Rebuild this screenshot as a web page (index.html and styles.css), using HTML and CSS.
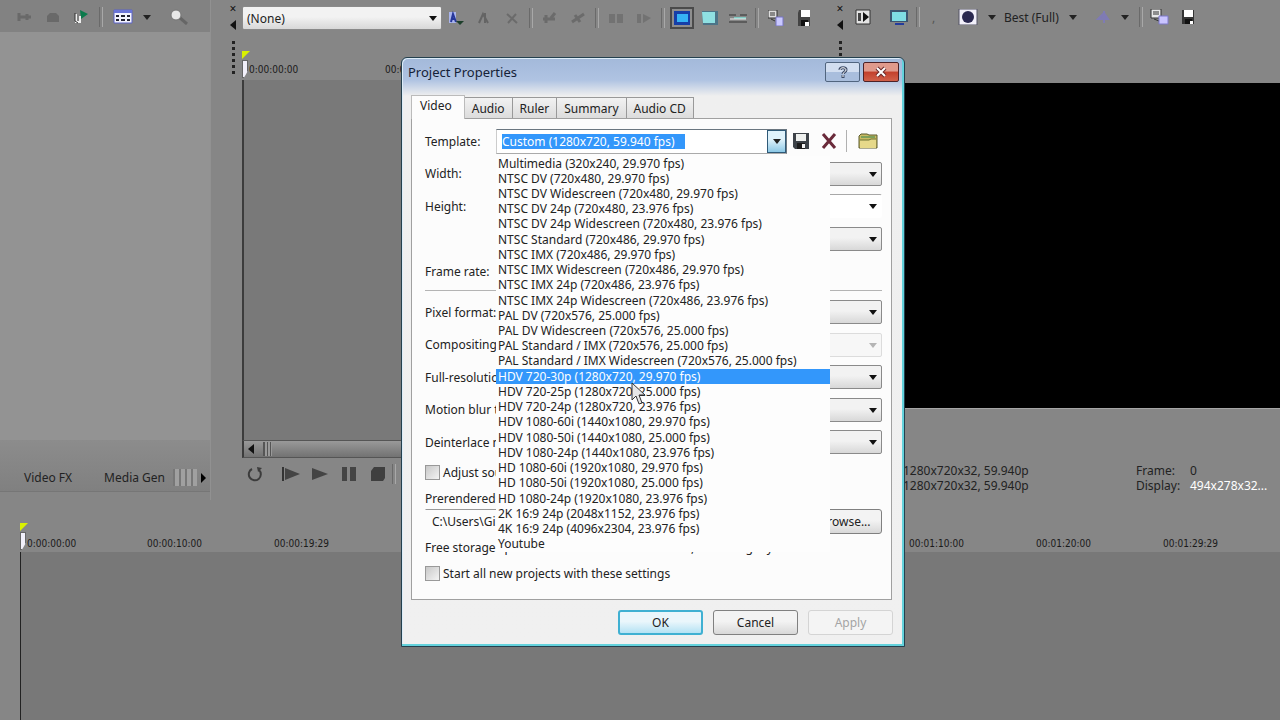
FILE: index.html
```
<!DOCTYPE html>
<html lang="en">
<head>
    <meta charset="UTF-8">
    <meta name="viewport" content="width=device-width, initial-scale=1.0">
    <title>Project Properties</title>
    <link rel="stylesheet" href="styles.css">
</head>
<body>
    <div class="app">
        <div class="workspace">
            <!-- media panel -->
            <section class="panel media">
                <div class="toolbar">
                    <svg class="icon faded" viewBox="0 0 16 16"><path d="M2 4v8M2 8h12M10 5v6" stroke="#444" stroke-width="3" fill="none"/></svg>
                    <svg class="icon faded" viewBox="0 0 16 16"><path d="M2 13V7l3-3h6l3 3v6z" fill="#444"/></svg>
                    <svg class="icon" viewBox="0 0 16 16"><path d="M7 1l8 4-7 5z" fill="#0c7a4c"/><path d="M3 5v8h4V7" stroke="#eee" stroke-width="2" fill="none"/><path d="M2 4v8l3 2" stroke="#333" fill="none"/></svg>
                    <span class="sep"></span>
                    <svg class="icon wide" viewBox="0 0 20 16"><path d="M1 1h18v13H1z" fill="#f4f4ff" stroke="#5a62c8"/><path d="M1 1h18v3H1z" fill="#6a74d8"/><path d="M3 6h3v2H3zM8 6h4v2H8zM14 6h3v2h-3zM3 10h3v2H3zM8 10h4v2H8zM14 10h3v2h-3z" fill="#223"/></svg>
                    <span class="arrow"></span>
                    <svg class="icon wide zoom" viewBox="0 0 20 16"><path d="M10 8l8 7" stroke="#666" stroke-width="3"/><circle cx="7" cy="6" r="5" fill="#e8e8e8" stroke="#777"/></svg>
                </div>
                <div class="media-list"></div>
                <div class="media-tabs">
                    <a href="#">Video FX</a>
                    <a href="#">Media Gen</a>
                    <span class="ridges"></span>
                    <span class="arrow right"></span>
                </div>
            </section>

            <!-- trimmer -->
            <section class="panel docked">
                <div class="grip"><span>×</span><span class="arrow left"></span><i></i></div>
                <div class="trimmer">
                    <div class="toolbar slots">
                        <span class="picker">
                            <select aria-label="Trimmer media"><option>(None)</option></select>
                        </span>
                        <svg class="icon" viewBox="0 0 16 16"><path d="M1 2h7v11H1z" fill="#a9b4ec"/><path d="M3 12l2-8 3 8M4 9h3" stroke="#26379a" stroke-width="2" fill="none"/><path d="M8 11h8l-4 4z" fill="#1d3f2b"/></svg>
                        <svg class="icon faded" viewBox="0 0 16 16"><path d="M3 13l4-9 5 9M9 3v10" stroke="#333" stroke-width="2" fill="none"/></svg>
                        <svg class="icon faded" viewBox="0 0 16 16"><path d="M3 4l10 9M12 4l-8 9" stroke="#444" stroke-width="2"/></svg>
                        <span class="sep"></span>
                        <svg class="icon faded" viewBox="0 0 16 16"><path d="M1 9h12M4 5v8M13 3l-4 5" stroke="#444" stroke-width="3" fill="none"/></svg>
                        <svg class="icon faded" viewBox="0 0 16 16"><path d="M2 12L14 4M5 5l5 7" stroke="#444" stroke-width="3" fill="none"/></svg>
                        <span class="sep"></span>
                        <svg class="icon faded" viewBox="0 0 16 16"><path d="M1 4h6v9H1zM9 4h6v9H9z" fill="#555"/></svg>
                        <svg class="icon faded" viewBox="0 0 16 16"><path d="M1 4h4v9H1zM7 4l8 4-8 5z" fill="#555"/></svg>
                        <span class="sep"></span>
                        <svg class="icon active" viewBox="0 0 16 16"><path d="M0 1h16v14H0z" fill="#163fa8"/><path d="M3 4h11v8H3z" fill="#35b4f5"/></svg>
                        <svg class="icon" viewBox="0 0 16 16"><path d="M0 1h16v14H1z" fill="#4c7488"/><path d="M0 2h13v11H1z" fill="#8fe0e2"/></svg>
                        <svg class="icon wide" viewBox="0 0 20 16"><path d="M1 12h18M1 5h7M12 5h7" stroke="#333" stroke-width="1"/><path d="M6 7h12v2H6z" fill="#7fc9c2"/><path d="M2 9h16" stroke="#eee"/></svg>
                        <span class="sep"></span>
                        <svg class="icon" viewBox="0 0 16 16"><path d="M0 0h9v8H0z" fill="#ddd" stroke="#333"/><path d="M2 3h5M2 5h5M3 9l4 2" stroke="#333"/><path d="M8 7h7v9H8z" fill="#c9c8ff" stroke="#7774c4"/></svg>
                        <svg class="icon" viewBox="0 0 16 16"><path d="M3 0h11v16H2V3z" fill="#444"/><path d="M5 0h9v7H5z" fill="#fff"/><path d="M5 10h7v6H5z" fill="#111"/><path d="M9 12h4v4H9z" fill="#fff"/></svg>
                    </div>
                    <div class="ruler short">
                        <span class="marker"></span>
                        <span>0:00:00:00</span>
                        <span>00:00:10:00</span>
                    </div>
                    <div class="wave"></div>
                    <div class="scroll"><span class="arrow left"></span><i></i></div>
                    <div class="transport">
                        <svg class="icon" viewBox="0 0 16 16"><path d="M5 3a6 6 0 1 0 7 1" fill="none" stroke="#3c3c3c" stroke-width="2"/><path d="M10 1l5 1-4 4z" fill="#3c3c3c"/></svg>
                        <svg class="icon wide" viewBox="0 0 20 16"><path d="M2 1v14" stroke="#333" stroke-width="2"/><path d="M4 2l15 6-15 6z" fill="#444"/></svg>
                        <svg class="icon" viewBox="0 0 16 16"><path d="M0 2l16 6-16 6z" fill="#444"/></svg>
                        <svg class="icon" viewBox="0 0 16 16"><path d="M1 1h5v14H1zM9 1h6v14H9z" fill="#444"/></svg>
                        <svg class="icon" viewBox="0 0 16 16"><path d="M1 5l3-4h11v11l-2 3H1z" fill="#3f3f3f"/></svg>
                        <span class="sep"></span>
                    </div>
                </div>
            </section>

            <!-- preview -->
            <section class="panel docked preview-panel">
                <div class="grip"><span>×</span><span class="arrow left"></span><i></i></div>
                <div class="preview">
                    <div class="toolbar preview-bar">
                        <svg class="icon" viewBox="0 0 16 16"><path d="M1 1h14v14H1z" fill="#e4e4e4" stroke="#333"/><path d="M3 4h3v8H3z" fill="#444"/><path d="M8 3l6 5-6 5z" fill="#111"/></svg>
                        <svg class="icon wide" viewBox="0 0 20 16"><path d="M1 1h18v12H1z" fill="#3d5570"/><path d="M3 3h14v9H3z" fill="#7fdde4"/><path d="M6 14h9v2H6z" fill="#233c9c"/></svg>
                        <span class="sep"></span>
                        <span class="dim">,</span>
                        <svg class="icon wide" viewBox="0 0 20 16"><path d="M1 0h18v16H1z" fill="#f2f0fa" stroke="#556"/><circle cx="10" cy="8" r="6" fill="#2a2850"/></svg>
                        <span class="arrow"></span>
                        <span class="quality">Best (Full)</span>
                        <span class="arrow"></span>
                        <svg class="icon overlay" viewBox="0 0 16 16"><path d="M9 2v12M3 10l6-6 4 6z" stroke="#7f7bb4" stroke-width="2" fill="#7f7bb4"/></svg>
                        <span class="arrow"></span>
                        <span class="sep"></span>
                        <svg class="icon wide copy" viewBox="0 0 20 16"><path d="M1 0h10v9H1z" fill="#e8e8e8" stroke="#333"/><path d="M3 3h6M3 5h6M4 10l5 2" stroke="#333"/><path d="M9 7h9v8H9z" fill="#c9c4ff" stroke="#7d78c8"/></svg>
                        <svg class="icon" viewBox="0 0 16 16"><path d="M2 1h12v14H2z" fill="#333"/><path d="M4 1h9v7H4z" fill="#fff"/><path d="M5 10h7v5H5z" fill="#111"/><path d="M10 12h3v3h-3z" fill="#fff"/></svg>
                    </div>
                    <div class="screen"></div>
                    <dl class="status">
                        <dt>Project:</dt><dd>1280x720x32, 59.940p</dd>
                        <dt>Frame:</dt><dd>0</dd>
                        <dt>Preview:</dt><dd>1280x720x32, 59.940p</dd>
                        <dt>Display:</dt><dd class="live">494x278x32...</dd>
                    </dl>
                </div>
            </section>
        </div>

        <!-- timeline -->
        <section class="timeline">
            <div class="ruler">
                <span class="marker"></span>
                <span>0:00:00:00</span>
                <span>00:00:10:00</span>
                <span>00:00:19:29</span>
                <span>00:00:29:29</span>
                <span>00:00:39:29</span>
                <span>00:00:50:00</span>
                <span>00:00:59:28</span>
                <span>00:01:10:00</span>
                <span>00:01:20:00</span>
                <span>00:01:29:29</span>
            </div>
            <div class="tracks"></div>
        </section>
    </div>

    <div class="dialog" role="dialog" aria-labelledby="dlg-title">
        <header class="titlebar">
            <h1 id="dlg-title">Project Properties</h1>
            <button class="win-btn" aria-label="Help">
                <svg class="glyph" viewBox="0 0 12 12"><path d="M3 4c0-3 6-3 6 0 0 2-3 2-3 4M6 9v3" fill="none" stroke="#3c4a66" stroke-width="3"/><path d="M3 4c0-3 6-3 6 0 0 2-3 2-3 4M6 9v2" fill="none" stroke="#fff" stroke-width="1"/></svg>
            </button>
            <button class="win-btn close" aria-label="Close">
                <svg class="glyph" viewBox="0 0 12 12"><path d="M2 2l8 8M10 2l-8 8" stroke="#6b2a2a" stroke-width="4"/><path d="M2 2l8 8M10 2l-8 8" stroke="#fff" stroke-width="2"/></svg>
            </button>
        </header>

        <nav class="tabs" role="tablist">
            <button class="tab current" role="tab">Video</button>
            <button class="tab" role="tab">Audio</button>
            <button class="tab" role="tab">Ruler</button>
            <button class="tab" role="tab">Summary</button>
            <button class="tab" role="tab">Audio CD</button>
        </nav>

        <form class="page">
            <div class="fields">
                <div class="row">
                    <label class="template-label" for="template">Template:</label>
                    <div class="combo">
                        <input id="template" type="text" role="combobox" aria-expanded="true" aria-controls="templates" value="Custom (1280x720, 59.940 fps)">
                        <button type="button" class="combo-btn" aria-label="Open list"><span class="arrow"></span></button>
                        <ul class="templates" id="templates" role="listbox">
                            <li role="option">Multimedia (320x240, 29.970 fps)</li>
                            <li role="option">NTSC DV (720x480, 29.970 fps)</li>
                            <li role="option">NTSC DV Widescreen (720x480, 29.970 fps)</li>
                            <li role="option">NTSC DV 24p (720x480, 23.976 fps)</li>
                            <li role="option">NTSC DV 24p Widescreen (720x480, 23.976 fps)</li>
                            <li role="option">NTSC Standard (720x486, 29.970 fps)</li>
                            <li role="option">NTSC IMX (720x486, 29.970 fps)</li>
                            <li role="option">NTSC IMX Widescreen (720x486, 29.970 fps)</li>
                            <li role="option">NTSC IMX 24p (720x486, 23.976 fps)</li>
                            <li role="option">NTSC IMX 24p Widescreen (720x486, 23.976 fps)</li>
                            <li role="option">PAL DV (720x576, 25.000 fps)</li>
                            <li role="option">PAL DV Widescreen (720x576, 25.000 fps)</li>
                            <li role="option">PAL Standard / IMX (720x576, 25.000 fps)</li>
                            <li role="option">PAL Standard / IMX Widescreen (720x576, 25.000 fps)</li>
                            <li role="option" class="selected" aria-selected="true">HDV 720-30p (1280x720, 29.970 fps)</li>
                            <li role="option">HDV 720-25p (1280x720, 25.000 fps)</li>
                            <li role="option">HDV 720-24p (1280x720, 23.976 fps)</li>
                            <li role="option">HDV 1080-60i (1440x1080, 29.970 fps)</li>
                            <li role="option">HDV 1080-50i (1440x1080, 25.000 fps)</li>
                            <li role="option">HDV 1080-24p (1440x1080, 23.976 fps)</li>
                            <li role="option">HD 1080-60i (1920x1080, 29.970 fps)</li>
                            <li role="option">HD 1080-50i (1920x1080, 25.000 fps)</li>
                            <li role="option">HD 1080-24p (1920x1080, 23.976 fps)</li>
                            <li role="option">2K 16:9 24p (2048x1152, 23.976 fps)</li>
                            <li role="option">4K 16:9 24p (4096x2304, 23.976 fps)</li>
                            <li role="option">Youtube</li>
                        </ul>
                    </div>
                    <button type="button" class="tool" aria-label="Save template">
                        <svg class="icon" viewBox="0 0 16 16"><path d="M0 0h16v16H2l-2-2z" fill="#3d4248"/><path d="M3 1h10v7H3z" fill="#eef0ee"/><path d="M4 10h8v6H4z" fill="#1c1c1c"/><path d="M9 11h3v4H9z" fill="#f4f4f4"/></svg>
                    </button>
                    <button type="button" class="tool" aria-label="Delete template">
                        <svg class="icon" viewBox="0 0 16 16"><path d="M2 1l12 14M14 1L2 15" stroke="#6a2a3a" stroke-width="3"/></svg>
                    </button>
                    <span class="rule"></span>
                    <button type="button" class="tool" aria-label="Match media settings">
                        <svg class="icon wide" viewBox="0 0 20 16"><path d="M1 3l2-2h6l2 1h8v13H1z" fill="#c9bb62" stroke="#5b5a2c"/><path d="M3 4h14" stroke="#7ea05a" stroke-width="2"/><path d="M2 7h9l2-1h5v9H2z" fill="#e6d98a"/><path d="M2 7h9l2-1h5" stroke="#6d7232" fill="none"/></svg>
                    </button>
                </div>
                <div class="row">
                    <label for="width">Width:</label>
                    <span class="picker"><select id="width"><option></option></select></span>
                </div>
                <div class="row">
                    <label for="height">Height:</label>
                    <span class="picker flat"><select id="height"><option></option></select></span>
                </div>
                <div class="row">
                    <span class="spacer"></span>
                    <span class="picker"><select aria-label="Field order"><option></option></select></span>
                </div>
                <div class="row">
                    <label>Frame rate:</label>
                </div>
            </div>

            <hr>

            <div class="fields">
                <div class="row">
                    <label for="pixel">Pixel format:</label>
                    <span class="picker"><select id="pixel"><option></option></select></span>
                </div>
                <div class="row">
                    <label for="gamma">Compositing gamma:</label>
                    <span class="picker off"><select id="gamma" disabled><option></option></select></span>
                </div>
                <div class="row">
                    <label for="quality">Full-resolution rendering:</label>
                    <span class="picker"><select id="quality"><option></option></select></span>
                </div>
                <div class="row">
                    <label for="blur">Motion blur type:</label>
                    <span class="picker"><select id="blur"><option></option></select></span>
                </div>
                <div class="row">
                    <label for="deinterlace">Deinterlace method:</label>
                    <span class="picker"><select id="deinterlace"><option></option></select></span>
                </div>
            </div>

            <label class="check"><input type="checkbox">Adjust source media to better match project</label>
            <label class="folder-label" for="folder">Prerendered files folder:</label>
            <div class="folder">
                <input id="folder" type="text" value="C:\Users\Gi">
                <button type="button" class="btn browse">Browse...</button>
            </div>
            <p class="storage"><span>Free storage space in selected folder:</span><span>302,118.7 Megabytes</span></p>
            <label class="check"><input type="checkbox">Start all new projects with these settings</label>
        </form>

        <footer class="actions">
            <button class="btn default">OK</button>
            <button class="btn">Cancel</button>
            <button class="btn" disabled>Apply</button>
        </footer>
        <svg class="cursor" viewBox="0 0 16 24"><path d="M1 1v17l4-4 3 8 3-1-3-8h6z" fill="#e6e6e6" stroke="#333"/></svg>
    </div>
</body>
</html>
```
FILE: styles.css
```
* {
    box-sizing: border-box;
}
body {
    margin: 0;
    background-color: #868686;
    font-family: "Noto Sans", "DejaVu Sans", sans-serif;
    font-size: 12px;
    color: #222;
}
button, input, select {
    font: inherit;
    color: inherit;
}
.app {
    display: flex;
    flex-direction: column;
    min-height: 100vh;
}

/* shared bits */
.icon {
    width: 16px;
    height: 16px;
    flex: none;
}
.icon.wide {
    width: 20px;
}
.icon.faded {
    opacity: 0.4;
}
.sep {
    flex: none;
    width: 4px;
    height: 20px;
    border-left: 1px solid #6a6a6a;
    border-right: 1px solid #a8a8a8;
}
.arrow {
    flex: none;
    border: 4px solid transparent;
    border-top: 5px solid #222;
    border-bottom: 0;
}
.arrow.left {
    border: 5px solid transparent;
    border-right: 6px solid #111;
    border-left: 0;
}
.arrow.right {
    border: 5px solid transparent;
    border-left: 5px solid #000;
    border-right: 0;
}

/* workspace */
.workspace {
    display: grid;
    grid-template-columns: 211px 591px 1fr;
    column-gap: 16px;
    height: 500px;
}
.panel {
    min-width: 0;
}
.toolbar {
    display: flex;
    align-items: center;
    height: 34px;
}
.media {
    display: flex;
    flex-direction: column;
    border-right: 1px solid #919191;
}
.media .toolbar {
    height: 32px;
    padding: 2px 0 0 17px;
    gap: 12px;
    background-color: #828282;
}
.media .toolbar .arrow {
    margin-left: -2px;
}
.media .toolbar .zoom {
    margin-left: 6px;
}
.media .sep {
    margin: 0 -2px;
}
.media-list {
    flex: 1;
    background-color: #939393;
}
.media-tabs {
    display: flex;
    align-items: center;
    gap: 32px;
    height: 52px;
    margin-bottom: 8px;
    padding: 24px 0 0 24px;
    border-bottom: 1px solid #767676;
    background: linear-gradient(#8c8c8c, #808080);
}
.media-tabs a {
    color: #222;
    text-decoration: none;
    white-space: nowrap;
}
.ridges {
    flex: none;
    width: 24px;
    height: 17px;
    margin: 0 -16px 0 -24px;
    background: repeating-linear-gradient(90deg, #777 0 2px, #a0a0a0 2px 6px);
}
.media-tabs .arrow {
    margin-left: -12px;
}

.docked {
    display: flex;
}
.grip {
    display: flex;
    flex-direction: column;
    align-items: center;
    gap: 3px;
    width: 12px;
    padding-top: 1px;
    color: #111;
    line-height: 16px;
}
.grip i {
    width: 3px;
    height: 36px;
    margin-top: 8px;
    background: repeating-linear-gradient(#222 0 3px, transparent 3px 6px);
}
.preview-panel .grip i {
    height: 24px;
}
.trimmer {
    display: flex;
    flex-direction: column;
    flex: 1;
    min-width: 0;
    padding-left: 3px;
}
.slots {
    padding-top: 2px;
}
.slots .icon {
    margin: 0 6px;
}
.slots .icon.wide {
    margin: 0 4px;
}
.slots .icon.active {
    width: 24px;
    height: 22px;
    margin: 0 2px;
    padding: 1px;
    border: 2px solid #4a4a4a;
    background-color: #8e8e8e;
}
.slots .sep {
    margin: 0 3px;
}
.slots .picker {
    flex: none;
    width: 200px;
}
.slots select {
    height: 22px;
    border: 1px solid #d8d8d8;
    border-radius: 0;
    background: linear-gradient(#ececec, #e0e0e0);
}
.ruler {
    display: grid;
    position: relative;
    grid-template-columns: repeat(10, 127px);
    align-items: end;
    overflow: hidden;
    font-family: "DejaVu Sans Condensed", sans-serif;
    font-size: 10px;
    line-height: 14px;
    color: #1a1a1a;
}
.ruler span:nth-child(2) {
    padding-left: 7px;
}
.ruler.short {
    grid-template-columns: repeat(2, 143px);
    height: 46px;
    padding-bottom: 3px;
}
/* playhead flag */
.marker {
    position: absolute;
    left: 0;
    bottom: 2px;
    width: 6px;
    height: 18px;
    border: 1px solid #666;
    background-color: #f2f0fa;
    clip-path: polygon(0 0, 100% 0, 100% 60%, 30% 100%, 0 100%);
}
.ruler::before {
    content: "";
    position: absolute;
    left: 0;
    bottom: 21px;
    border-top: 8px solid #d9f000;
    border-right: 8px solid transparent;
}
.wave {
    flex: 1;
    border-left: 2px solid #3c3c3c;
    background-color: #797979;
}
.scroll {
    display: flex;
    align-items: center;
    gap: 9px;
    height: 18px;
    padding-left: 4px;
    border: 1px solid #555;
    border-left: 2px solid #3c3c3c;
    background: linear-gradient(#999, #727272);
}
.scroll i {
    width: 9px;
    height: 14px;
    border-left: 2px solid #555;
    background: repeating-linear-gradient(90deg, #999 0 2px, #555 2px 3px);
}
.transport {
    display: flex;
    align-items: center;
    gap: 13px;
    height: 42px;
    padding: 0 0 10px 5px;
}
.transport .icon.wide {
    margin-left: 5px;
    margin-right: -2px;
}
.transport .sep {
    margin-left: -7px;
}

.preview {
    display: flex;
    flex-direction: column;
    flex: 1;
    min-width: 0;
    padding-left: 3px;
}
.preview-bar {
    gap: 10px;
    padding-left: 6px;
    white-space: nowrap;
}
.preview-bar .wide {
    margin-left: 8px;
}
.preview-bar .wide + .sep {
    margin-left: -3px;
}
.preview-bar .wide.copy {
    margin-left: -3px;
}
.preview-bar .dim {
    width: 8px;
    margin-left: 2px;
    color: #555;
}
.preview-bar .quality {
    margin-left: -2px;
}
.preview-bar .overlay {
    margin-left: 8px;
}
.screen {
    height: 326px;
    margin-top: 49px;
    background-color: #000;
    border-bottom: 1px solid #a5a5a5;
}
.status {
    display: grid;
    grid-template-columns: 54px 1fr 54px 90px;
    margin: 54px 0 0;
    line-height: 15px;
}
.status dd {
    margin: 0;
}
.status .live {
    color: #fff;
}

/* timeline */
.timeline {
    display: flex;
    flex-direction: column;
    flex: 1;
}
.timeline .ruler {
    height: 52px;
    margin-left: 20px;
    padding-bottom: 1px;
}
.tracks {
    flex: 1;
    margin-left: 20px;
    border-left: 1px solid #222;
    background-color: #787878;
}

/* dialog window */
.dialog {
    position: absolute;
    left: 401px;
    top: 57px;
    display: flex;
    flex-direction: column;
    width: 504px;
    padding: 0 12px 11px 9px;
    border: 1px solid #24404e;
    border-radius: 6px 6px 0 0;
    background: linear-gradient(#a3b9da, #afc3e2 22px, #efefef 38px, #f0f0f0);
    box-shadow: inset -2px -2px 0 #63d2dc, inset 1px 1px 0 #dcecf8;
}
.titlebar {
    display: flex;
    gap: 3px;
    height: 37px;
    padding-top: 4px;
    margin: 0 -7px 0 -3px;
}
.titlebar h1 {
    flex: 1;
    margin: 0;
    font-size: 13px;
    font-weight: normal;
    line-height: 21px;
    color: #152238;
}
.win-btn {
    display: flex;
    align-items: center;
    justify-content: center;
    width: 35px;
    height: 20px;
    padding: 0;
    border: 1px solid #51657f;
    border-radius: 2px;
    background: linear-gradient(#d2def0 50%, #a9bedd 50%);
}
.win-btn.close {
    width: 36px;
    border-color: #4c2228;
    background: linear-gradient(#e09a8c 45%, #c3402c 50%, #d0604a);
}
.glyph {
    width: 12px;
    height: 12px;
}

.tabs {
    display: flex;
    align-items: flex-end;
    height: 23px;
}
.tab {
    height: 21px;
    padding: 0 7px;
    border: 1px solid #999;
    border-left: 0;
    border-bottom: 0;
    background: linear-gradient(#f2f2f2, #dcdcdc);
}
.tab.current {
    height: 24px;
    margin-bottom: -1px;
    padding: 0 12px 4px 8px;
    border: 1px solid #bbb;
    border-bottom: 0;
    background: #fcfcfc;
    z-index: 1;
}
.page {
    height: 482px;
    padding: 10px 9px 0 13px;
    border: 1px solid #a0a0a0;
    background-color: #fcfcfc;
}
.fields {
    display: flex;
    flex-direction: column;
    justify-content: space-between;
    height: 154px;
}
.row {
    display: flex;
    align-items: center;
    height: 24px;
    white-space: nowrap;
}
.row > label, .spacer {
    flex: none;
    width: 160px;
}
.row > .template-label {
    width: 71px;
}
.page hr {
    height: 1px;
    margin: 7px 0 9px;
    border: 0;
    background-color: #b4b4b4;
}
.picker {
    position: relative;
    flex: 1;
}
.picker::after {
    content: "";
    position: absolute;
    right: 5px;
    top: 10px;
    border: 4px solid transparent;
    border-top: 5px solid #111;
    border-bottom: 0;
    pointer-events: none;
}
.picker select {
    appearance: none;
    display: block;
    width: 100%;
    height: 24px;
    padding: 0 4px;
    border: 1px solid #8a8a8a;
    border-radius: 2px;
    background: linear-gradient(#f2f2f2 45%, #d8d8d8);
}
.picker.flat select {
    border-color: #a8a8a8 transparent transparent;
    background: #fff;
}
.picker.off select {
    border-color: #cfcfcf;
    background: #f6f6f6;
}
.picker.off::after {
    border-top-color: #b4b4b4;
}
.combo {
    position: relative;
    display: flex;
    align-items: center;
    flex: 1;
    height: 25px;
    padding-left: 5px;
    border: 1px solid #6a7680;
    border-left-color: #ccc;
    border-bottom-color: #aaa;
    background-color: #fff;
}
.combo input {
    width: 183px;
    height: 15px;
    padding: 0;
    border: 0;
    background-color: #3397fb;
    color: #fff;
}
.combo-btn {
    display: flex;
    align-items: center;
    justify-content: center;
    align-self: stretch;
    width: 19px;
    margin-left: auto;
    padding: 0;
    border: 1px solid #2f5a78;
    background: linear-gradient(#dff2fb 40%, #8cc8e6);
}
/* open list */
.templates {
    position: absolute;
    z-index: 2;
    left: -1px;
    top: 26px;
    display: grid;
    grid-template-rows: repeat(26, 1fr);
    width: 334px;
    height: 396px;
    margin: 0;
    padding: 0;
    background-color: #fdfdfd;
    list-style: none;
    line-height: 15px;
}
.templates li {
    padding-left: 2px;
}
.templates .selected {
    background-color: #3397fb;
    color: #fff;
}
.tool {
    display: flex;
    justify-content: center;
    width: 28px;
    padding: 0;
    border: 0;
    background: none;
}
.rule {
    width: 1px;
    height: 22px;
    margin: 0 7px 0 3px;
    background-color: #b0b0b0;
}
.check {
    display: flex;
    align-items: center;
    gap: 3px;
    height: 16px;
    white-space: nowrap;
}
.check input {
    appearance: none;
    width: 15px;
    height: 15px;
    margin: 0;
    border: 1px solid #999;
    background: linear-gradient(135deg, #c8c8c8, #f4f4f4);
}
.fields + .check {
    margin-top: 10px;
}
.folder-label {
    display: block;
    margin-top: 11px;
    line-height: 16px;
}
.folder {
    display: flex;
    gap: 6px;
    height: 25px;
    margin: 2px 0 3px;
}
.folder input {
    flex: 1;
    min-width: 0;
    padding: 0 6px;
    border: 1px solid transparent;
    border-top-color: #999;
    background-color: #fcfcfc;
}
.storage {
    display: flex;
    gap: 36px;
    margin: 0;
    padding-top: 3px;
    line-height: 16px;
}
.storage + .check {
    margin-top: 9px;
}
.actions {
    display: flex;
    justify-content: flex-end;
    gap: 10px;
    margin: 10px -1px 0 0;
}
.btn {
    width: 85px;
    height: 25px;
    padding: 0;
    border: 1px solid #808080;
    border-radius: 3px;
    background: linear-gradient(#f3f3f3 45%, #d8d8d8);
}
.btn.browse {
    width: 74px;
}
.btn.default {
    border: 2px solid #3fb0d2;
    background: linear-gradient(#eaf6fb 45%, #b4e2f4);
}
.btn:disabled {
    border-color: #d4d4d4;
    background: #f4f4f4;
    color: #a4a4a4;
}
.cursor {
    position: absolute;
    z-index: 3;
    left: 229px;
    top: 324px;
    width: 16px;
    height: 24px;
}
```
